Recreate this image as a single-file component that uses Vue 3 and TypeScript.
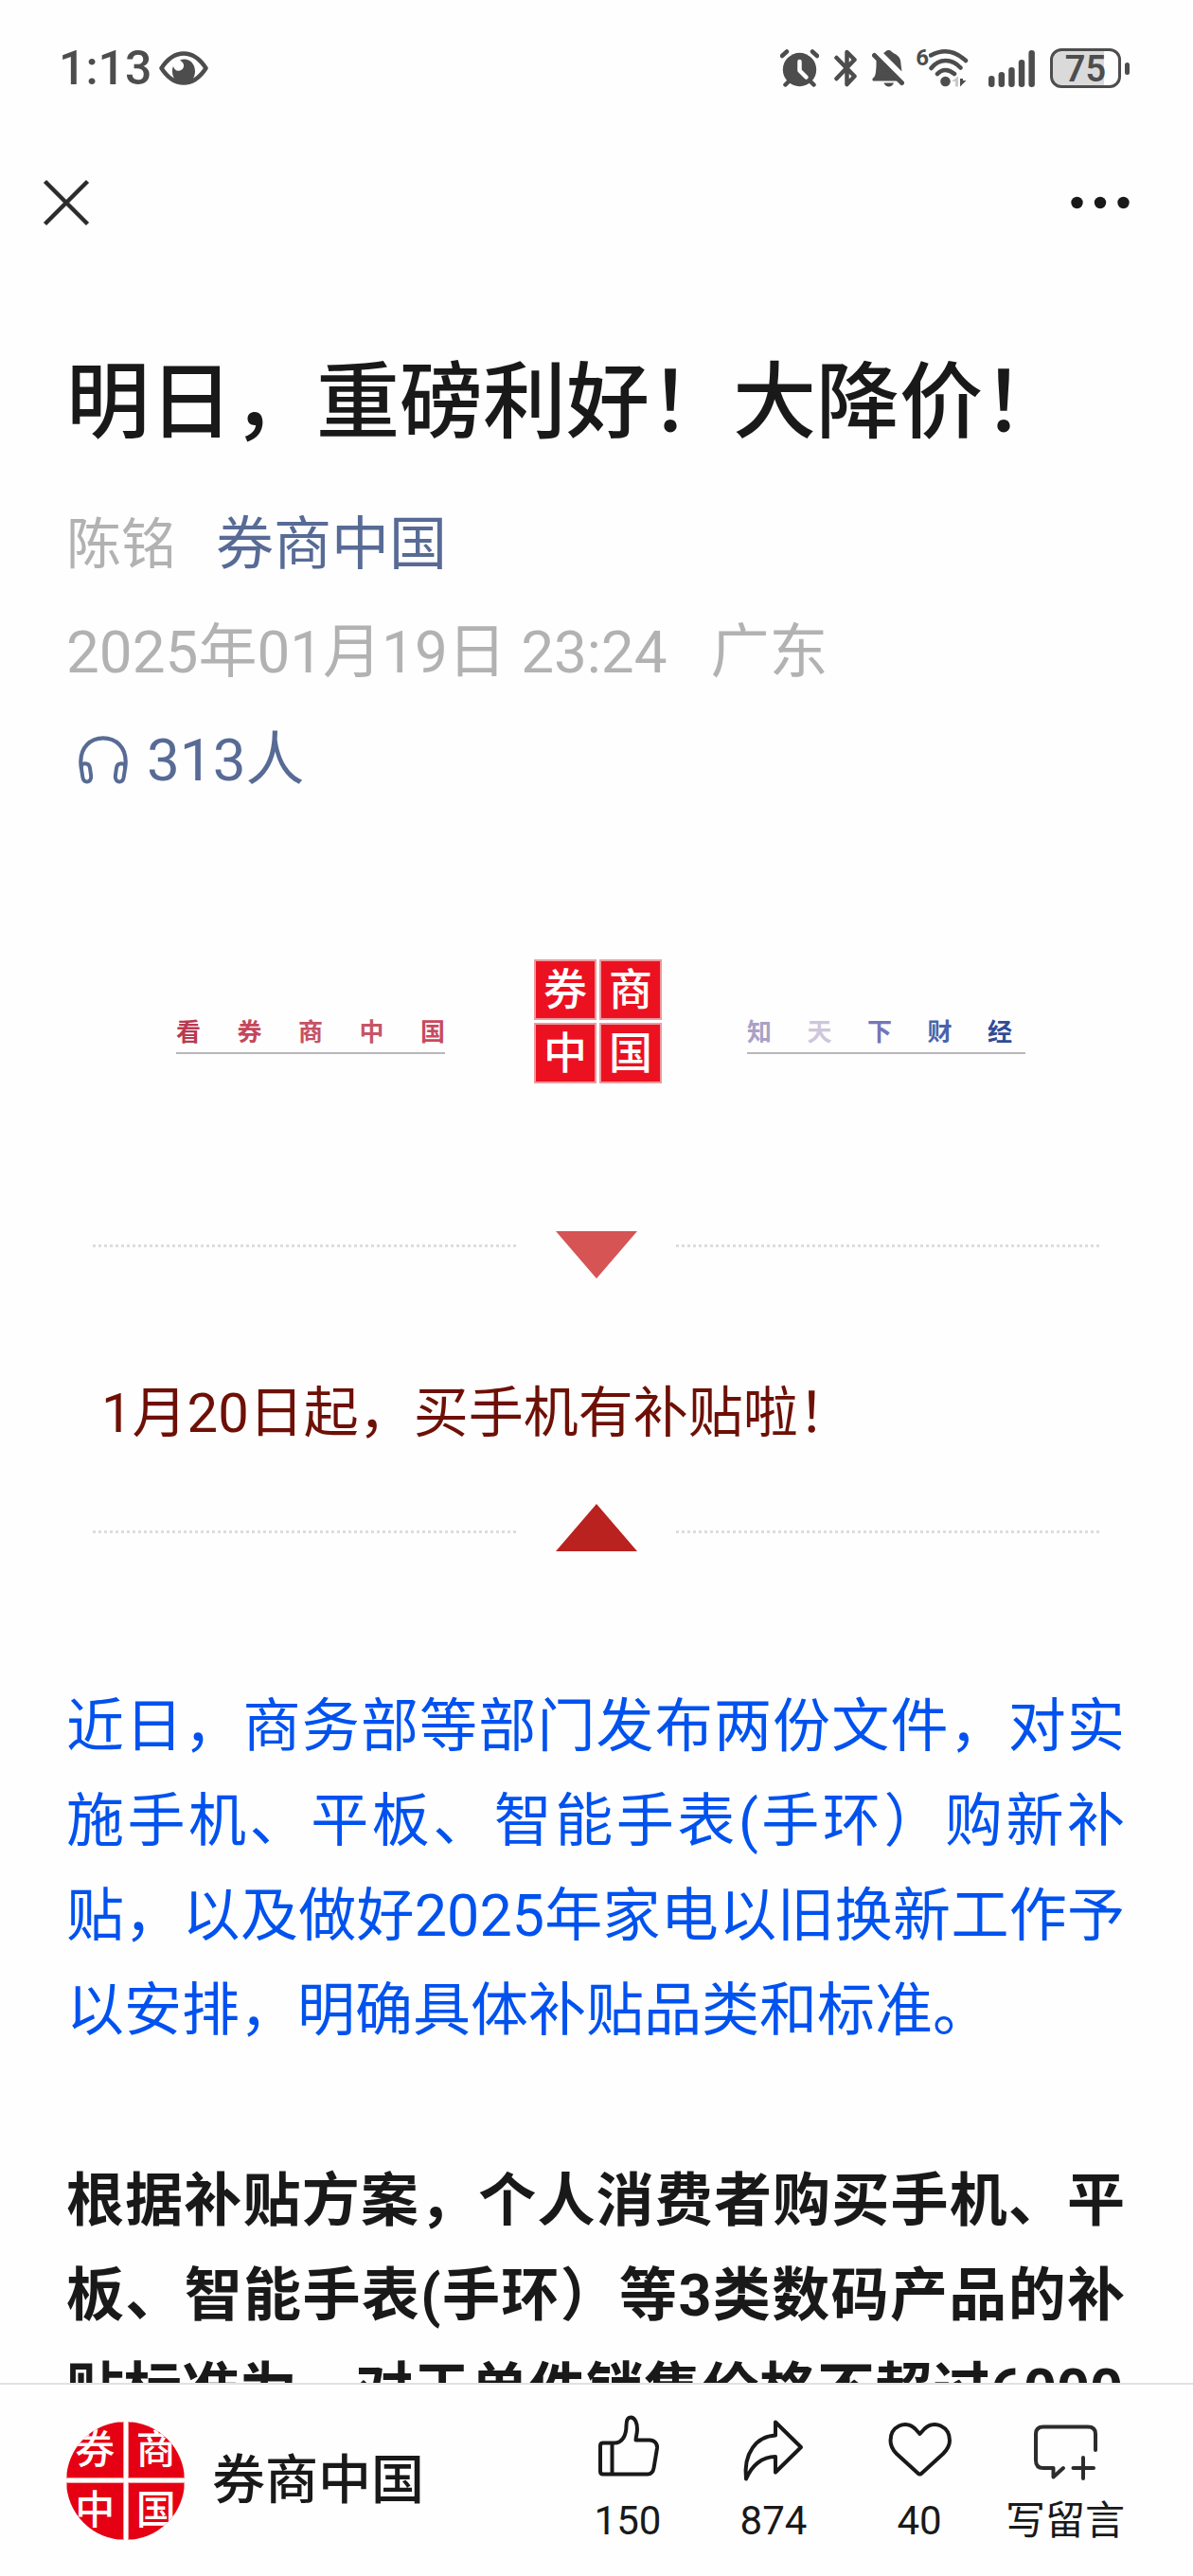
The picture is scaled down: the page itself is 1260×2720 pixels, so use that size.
<script setup lang="ts">
interface SloganChar {
  text: string
  color: string
}

const sealChars: string[] = ['券', '商', '中', '国']

const leftSlogan: SloganChar[] = [
  { text: '看', color: '#b93a50' },
  { text: '券', color: '#c4465b' },
  { text: '商', color: '#c65064' },
  { text: '中', color: '#c65567' },
  { text: '国', color: '#c84a5c' },
]

const rightSlogan: SloganChar[] = [
  { text: '知', color: '#aaa0c6' },
  { text: '天', color: '#cfc6dc' },
  { text: '下', color: '#7676b8' },
  { text: '财', color: '#4865ab' },
  { text: '经', color: '#304c96' },
]

const signalBars: number[] = [12, 16, 21, 29, 39]
</script>

<template>
  <div class="screen">
    <div class="status">
      <div class="status-left">
        <span class="clock">1:13</span>
        <svg class="eye" width="52" height="36" viewBox="0 0 52 36" aria-hidden="true">
          <path d="M2.500 18C9 8 16 2.500 26 2.500S43 8 49.500 18C43 28 36 33.500 26 33.500S9 28 2.500 18Z" fill="none" stroke="#4d4d4d" stroke-width="4.500" stroke-linejoin="round" />
          <path d="M22 9.500C30 6 38 12 38 21C38 27 35 31 31 34H21C17 31 14 27 14 21C14 19 14.300 17.500 15 16C16 20 19 21.500 22 20.500C27 19 28 13 22 9.500Z" fill="#4d4d4d" />
        </svg>
      </div>
      <div class="status-right">
        <svg width="41" height="40" viewBox="0 0 41 40" aria-hidden="true">
          <circle cx="20.500" cy="21.500" r="17.700" fill="#4d4d4d" />
          <path d="M2 7L7 2.500M39 7L34 2.500M5.500 37.500L9 34M35.500 37.500L32 34" stroke="#4d4d4d" stroke-width="4.500" stroke-linecap="round" />
          <path d="M20.500 13V22.500L27.500 29.500" fill="none" stroke="#fefefe" stroke-width="4.500" stroke-linecap="round" stroke-linejoin="round" />
        </svg>
        <svg class="bluetooth" width="24" height="40" viewBox="0 0 24 40" aria-hidden="true">
          <path d="M2.500 9L21.500 28.500L13.500 37V3L21.500 11L2.500 31" fill="none" stroke="#4d4d4d" stroke-width="4.500" stroke-linecap="round" stroke-linejoin="round" />
        </svg>
        <svg class="bell" width="34" height="40" viewBox="0 0 34 40" aria-hidden="true">
          <path d="M12 4C14 3.500 14.500 1 17.500 1S21 3.500 23.500 4.500C29 7 30.500 11 30.500 16L31.500 23.500Z" fill="#4d4d4d" />
          <path d="M5 9L30 33.500H2C0 33.500 0 31 1.500 30C4 28 4 24 4.500 18C4.500 14 4.500 12 5 9Z" fill="#4d4d4d" />
          <path d="M2.500 6.500L31.500 35.500" stroke="#4d4d4d" stroke-width="5" stroke-linecap="round" />
          <path d="M12.500 35.500H23C22 38 20 39.500 17.700 39.500S13.500 38 12.500 35.500Z" fill="#4d4d4d" />
        </svg>
        <div class="wifi">
          <span class="wifi-gen">6</span>
          <svg width="43" height="40" viewBox="0 0 43 40" aria-hidden="true">
            <path d="M2 6.500C14 0 27 1 39 12M2.500 20C11 9.500 24 9.500 33.500 19.500M9 26C14 20.500 21 20.500 27 26" fill="none" stroke="#4d4d4d" stroke-width="4.500" stroke-linecap="round" />
            <circle cx="17.500" cy="34" r="5.300" fill="#4d4d4d" />
            <path d="M24 34L31 28.500V39.500H28V34Z" fill="#c9c9c9" />
            <path d="M33 31V39.500L39.500 33H36V31Z" fill="#4d4d4d" />
          </svg>
        </div>
        <svg class="signal" width="49" height="40" viewBox="0 0 49 40" aria-hidden="true">
          <rect v-for="(bar, i) in signalBars" :key="bar" :x="i * 10.6" :y="40 - bar" width="6.500" :height="bar" rx="3.200" fill="#4d4d4d" />
        </svg>
        <div class="battery"><span class="battery-level">75</span></div>
        <span class="battery-tip"></span>
      </div>
    </div>

    <nav class="nav">
      <button class="icon-button" type="button" aria-label="关闭">
        <svg width="50" height="50" viewBox="0 0 50 50" aria-hidden="true">
          <path d="M2.500 2.500L47.500 47.500M47.500 2.500L2.500 47.500" stroke="#2c2c2c" stroke-width="4.500" />
        </svg>
      </button>
      <button class="icon-button" type="button" aria-label="更多">
        <svg width="62" height="14" viewBox="0 0 62 14" aria-hidden="true">
          <circle cx="6.500" cy="7" r="6.200" fill="#191919" />
          <circle cx="31" cy="7" r="6.200" fill="#191919" />
          <circle cx="55.500" cy="7" r="6.200" fill="#191919" />
        </svg>
      </button>
    </nav>

    <article class="article">
      <h1 class="title">明日，重磅利好！大降价！</h1>
      <div class="meta author">
        <span class="writer">陈铭</span>
        <a class="link account-link" href="#">券商中国</a>
      </div>
      <div class="meta date">
        <span>2025年01月19日 23:24</span>
        <span>广东</span>
      </div>
      <a class="meta listen link" href="#">
        <svg width="52" height="52" viewBox="0 0 52 52" aria-hidden="true">
          <path d="M3 35C2.500 32 2.300 30 2.300 27C2.300 12.500 12 2.300 26 2.300S49.700 12.500 49.700 27C49.700 30 49.500 32 49 35" fill="none" stroke="#576b95" stroke-width="4.200" />
          <path d="M3 35C2.500 31 3.500 29.500 6.500 29.200C10 29 11.500 31 12 34L13.200 42.500C13.500 46 11.500 48.300 9 48.500C6.500 48.500 4.800 46.500 4.300 43.500ZM49 35C49.500 31 48.500 29.500 45.500 29.200C42 29 40.500 31 40 34L38.800 42.500C38.500 46 40.500 48.300 43 48.500C45.500 48.500 47.200 46.500 47.700 43.500Z" fill="none" stroke="#576b95" stroke-width="4" stroke-linejoin="round" />
        </svg>
        <span>313人</span>
      </a>

      <div class="banner">
        <div class="slogan left">
          <span v-for="c in leftSlogan" :key="c.text" :style="{ color: c.color }">{{ c.text }}</span>
        </div>
        <div class="seal">
          <span v-for="c in sealChars" :key="c" class="seal-cell">{{ c }}</span>
        </div>
        <div class="slogan right">
          <span v-for="c in rightSlogan" :key="c.text" :style="{ color: c.color }">{{ c.text }}</span>
        </div>
      </div>

      <div class="divider down">
        <span class="dots"></span>
        <svg width="86" height="50" viewBox="0 0 86 50" aria-hidden="true"><path d="M0 0H86L43 50Z" fill="#d65454" /></svg>
        <span class="dots"></span>
      </div>
      <p class="lead">1月20日起，买手机有补贴啦！</p>
      <div class="divider up">
        <span class="dots"></span>
        <svg width="86" height="50" viewBox="0 0 86 50" aria-hidden="true"><path d="M0 50H86L43 0Z" fill="#b9221e" /></svg>
        <span class="dots"></span>
      </div>

      <p class="body-text summary">近日，商务部等部门发布两份文件，对实施手机、平板、智能手表(手环）购新补贴，以及做好2025年家电以旧换新工作予以安排，明确具体补贴品类和标准。</p>
      <p class="body-text strong">根据补贴方案，个人消费者购买手机、平板、智能手表(手环）等3类数码产品的补贴标准为，对于单件销售价格不超过6000</p>
    </article>

    <footer class="toolbar">
      <a class="account" href="#">
        <span class="avatar">
          <span v-for="c in sealChars" :key="c" class="avatar-cell">{{ c }}</span>
        </span>
        <span class="account-name">券商中国</span>
      </a>
      <div class="actions">
        <button class="action" type="button">
          <svg width="76" height="76" viewBox="0 0 76 76" aria-hidden="true">
            <path d="M12 31.500H24C32 31.500 36.500 24 36.500 13C36.500 7 38 4.500 41 4.500C46 4.500 48 11 48 17C48 22 46.500 25 46.500 28.500H61C66 28.500 69.500 32 69 37L65.500 58C64.800 62 63 64.500 59 64.500H12Q9 64.500 9 61.500V34.500Q9 31.500 12 31.500ZM21.500 31.500V64.500" />
          </svg>
          <span>150</span>
        </button>
        <button class="action" type="button">
          <svg width="76" height="76" viewBox="0 0 76 76" aria-hidden="true">
            <path d="M40 9.500L67 36L40 62.500V46C26 46 15 55 9 69.500C6 42 20 24.500 40 23.500Z" />
          </svg>
          <span>874</span>
        </button>
        <button class="action" type="button">
          <svg width="76" height="76" viewBox="0 0 76 76" aria-hidden="true">
            <path d="M38.500 22L33.500 16.500C23 6.500 7.500 14.500 7.500 29C7.500 34.500 10 39 14 43L36.500 63.500Q38.500 65.500 40.500 63.500L63 43C67 39 70 34.500 70 29C70 14.500 54 6.500 43.500 16.500Z" />
          </svg>
          <span>40</span>
        </button>
        <button class="action" type="button">
          <svg width="76" height="76" viewBox="0 0 76 76" aria-hidden="true">
            <path class="comment" d="M70 39V22Q70 14.500 62 14.500H15Q7 14.500 7 22V50Q7 58 15 58H25.500V67.500L36 58M57 47V69M46.500 58H68" />
          </svg>
          <span>写留言</span>
        </button>
      </div>
    </footer>
  </div>
</template>

<style>
body {
  background: #fefefe;
}
</style>

<style scoped>
.screen {
  display: flex;
  flex-direction: column;
  height: 100vh;
  overflow: hidden;
  background: #fefefe;
  color: #191919;
  font-family: Roboto, "Noto Sans CJK SC", sans-serif;
}

.status {
  flex: none;
  display: flex;
  align-items: center;
  justify-content: space-between;
  height: 144px;
  padding: 0 67px 0 62px;
  color: #4d4d4d;
}

.status-left,
.status-right {
  display: flex;
  align-items: center;
}

.clock {
  font-size: 50px;
  line-height: 56px;
  font-weight: 500;
}

.eye {
  margin-left: 8px;
}

.bluetooth {
  margin-left: 16px;
}

.bell {
  margin-left: 16px;
}

.wifi {
  display: flex;
  margin-left: 12px;
}

.wifi-gen {
  height: 40px;
  font-size: 24px;
  font-weight: 700;
  line-height: 18px;
}

.signal {
  margin-left: 20px;
}

.battery {
  box-sizing: border-box;
  width: 75px;
  height: 42px;
  margin-left: 16px;
  border: 3px solid #4d4d4d;
  border-radius: 12px;
  background: linear-gradient(90deg, #dadada 78%, #fefefe 78%);
  text-align: center;
}

.battery-level {
  display: block;
  font-size: 38px;
  font-weight: 600;
  line-height: 38px;
}

.battery-tip {
  width: 5px;
  height: 13px;
  margin-left: 4px;
  border-radius: 3px;
  background: #4d4d4d;
}

.nav {
  flex: none;
  display: flex;
  align-items: center;
  justify-content: space-between;
  height: 140px;
  padding: 0 67px 0 45px;
}

.icon-button {
  display: flex;
  padding: 0;
  border: 0;
  background: none;
}

.article {
  flex: 1;
  min-height: 0;
  overflow: hidden;
  padding: 81px 72px 0 70px;
}

.title {
  margin: 0 0 33px;
  font-size: 88px;
  font-weight: 500;
  line-height: 120px;
  white-space: nowrap;
}

.meta {
  display: flex;
  align-items: center;
  font-size: 62px;
  line-height: 114px;
  color: #b2b2b2;
}

.author {
  gap: 42px;
}

.writer {
  font-size: 58px;
}

.date {
  gap: 46px;
}

a {
  text-decoration: none;
}

.link {
  color: #576b95;
}

.account-link {
  font-size: 61px;
}

.listen {
  gap: 20px;
  padding-left: 13px;
}

.banner {
  display: flex;
  align-items: flex-start;
  margin-top: 153px;
  padding: 0 35px 0 116px;
}

.slogan {
  display: flex;
  justify-content: space-between;
  box-sizing: border-box;
  margin-top: 56px;
  border-bottom: 2px solid #b9b7b9;
  font-size: 26px;
  font-weight: 700;
  line-height: 42px;
}

.slogan.left {
  width: 284px;
}

.slogan.right {
  width: 294px;
  padding-right: 14px;
}

.seal {
  display: grid;
  grid-template-columns: 1fr 1fr;
  gap: 3px;
  width: 135px;
  margin: 0 90px 0 94px;
}

.seal-cell {
  border: 2px solid #ec9a9e;
  background: #ec1120;
  color: #fefefe;
  font-size: 46px;
  font-weight: 500;
  line-height: 60px;
  text-align: center;
}

.divider {
  display: flex;
  align-items: flex-start;
  gap: 41px;
  padding: 0 26px 0 28px;
}

.divider.down {
  margin-top: 156px;
}

.dots {
  flex: 1;
  height: 3px;
  margin-top: 14px;
  background: repeating-linear-gradient(90deg, #dddddd 0 3px, #fefefe 3px 6px);
}

.divider.up .dots {
  margin-top: 28px;
}

.lead {
  margin: 92px 0 46px;
  padding-left: 37px;
  color: #6e1006;
  font-size: 58px;
  line-height: 100px;
}

.body-text {
  margin: 0;
  font-size: 61px;
  line-height: 100px;
  text-align: justify;
}

.summary {
  margin-top: 135px;
  color: #0052ef;
}

.strong {
  margin-top: 101px;
  font-weight: 700;
}

.toolbar {
  flex: none;
  display: flex;
  justify-content: space-between;
  height: 202px;
  padding: 0 58px 0 70px;
  border-top: 2px solid #e2e2e2;
  background: #fefefe;
}

.account {
  display: flex;
  align-items: center;
  gap: 29px;
  color: #191919;
}

.avatar {
  display: grid;
  grid-template-columns: 1fr 1fr;
  gap: 4px;
  width: 125px;
  height: 125px;
  overflow: hidden;
  border-radius: 50%;
}

.avatar-cell {
  border: 1px solid #f0a0a4;
  background: #e50113;
  color: #fefefe;
  font-size: 42px;
  font-weight: 500;
  line-height: 58px;
  text-align: center;
}

.account-name {
  font-size: 56px;
  line-height: 80px;
  font-weight: 500;
}

.actions {
  display: grid;
  grid-template-columns: repeat(4, 154px);
}

.action {
  display: flex;
  flex-direction: column;
  align-items: center;
  padding: 30px 0 0;
  border: 0;
  background: none;
  color: #191919;
  font-family: inherit;
  font-size: 42px;
  line-height: 60px;
}

.action svg {
  margin-bottom: 8px;
}

.action path {
  fill: none;
  stroke: #191919;
  stroke-width: 4;
  stroke-linecap: round;
  stroke-linejoin: round;
}

.action .comment {
  stroke: #2c2c2c;
}
</style>
